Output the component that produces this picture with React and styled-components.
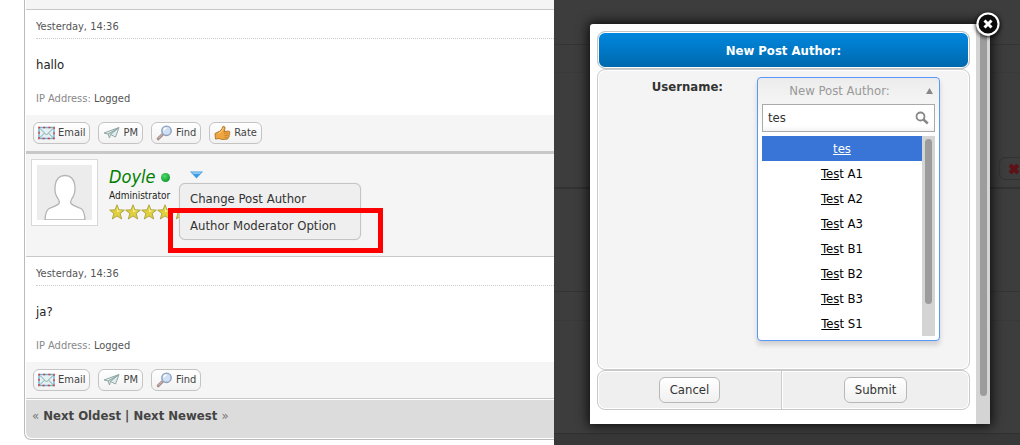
import React, { useState } from 'react';
import styled, { createGlobalStyle } from 'styled-components';

const Global = createGlobalStyle`
  * { box-sizing: border-box; }
  body {
    margin: 0;
    background: #fff;
    font-family: "DejaVu Sans Condensed", "DejaVu Sans", Tahoma, sans-serif;
    color: #333;
  }
  button, input { font-family: inherit; color: inherit; margin: 0; }
  svg { display: block; flex: none; }
`;

const Page = styled.div`
  display: grid;
  grid-template-columns: minmax(0, 554fr) minmax(0, 466fr);
  min-height: 100vh;
`;

/* ---------- Thread ---------- */

const Thread = styled.main`
  padding: 0 0 5px 24px;
  overflow: hidden;
`;

const ThreadPanel = styled.div`
  border: solid #bbb;
  border-width: 0 0 1px 1px;
  border-radius: 0 0 0 7px;
  padding: 0 0 1px 1px;
`;

const PostHead = styled.header`
  position: relative;
  display: flex;
  gap: 11px;
  min-height: ${p => (p.$short ? 10 : 103)}px;
  padding: ${p => (p.$short ? '0' : '5px')};
  background: #f5f5f5;
  border-bottom: 1px solid #c8c8c8;
`;

const PostBody = styled.div`
  padding: 10px 0 7px 10px;
`;

const PostDate = styled.div`
  height: 19px;
  border-bottom: 1px dotted #ccc;
  font-size: 11px;
  line-height: 14px;
  color: #555;
`;

const PostText = styled.p`
  margin: 0;
  padding: 16px 0 15px;
  font-size: 13px;
  line-height: 20px;
  color: #222;
`;

const PostMeta = styled.div`
  font-size: 11px;
  line-height: 18px;
  color: #888;
  span { color: #555; }
`;

const ActionBar = styled.div`
  display: flex;
  gap: 8px;
  padding: 7px;
  background: #f5f5f5;
  border-bottom: ${p => (p.$last ? 1 : 3)}px solid #c8c8c8;
`;

const ActionButton = styled.button`
  display: flex;
  align-items: center;
  gap: 3px;
  height: 22px;
  padding: 0 4px;
  border: 1px solid #c4c4c4;
  border-radius: 6px;
  background: linear-gradient(#fff, #f2f2f2);
  font-size: 11px;
  line-height: 14px;
  color: #444;
`;

const AvatarFrame = styled.div`
  width: 67px;
  height: 67px;
  padding: 5px;
  border: 1px solid #d8d8d8;
  background: #fff;
`;

const Author = styled.div`
  padding-top: 7px;
`;

const NameRow = styled.div`
  display: flex;
  align-items: center;
  gap: 6px;
  height: 22px;
`;

const AuthorName = styled.a`
  font-size: 18px;
  line-height: 22px;
  font-style: italic;
  color: green;
  text-decoration: none;
`;

const Online = styled.span`
  width: 9px;
  height: 9px;
  border-radius: 50%;
  background: radial-gradient(circle at 40% 35%, #4fdc6c, #0c9a2c 75%);
`;

const MenuToggle = styled.button`
  padding: 0 0 4px;
  margin-left: 14px;
  border: 0;
  background: none;
`;

const Role = styled.div`
  padding-top: 1px;
  font-size: 10px;
  line-height: 14px;
  color: #222;
`;

const Stars = styled.div`
  display: flex;
  padding-top: 1px;
`;

const Menu = styled.div`
  position: absolute;
  left: 153px;
  top: 29px;
  display: flex;
  flex-direction: column;
  width: 182px;
  padding: 1px 1px 0;
  border: 1px solid #c4c4c4;
  border-radius: 6px;
  background: #efefef;
  box-shadow: 0 0 1px #ccc;
`;

const MenuItem = styled.button`
  height: 27px;
  padding: 0 9px;
  border: 0;
  background: none;
  text-align: left;
  font-size: 13px;
  line-height: 20px;
  color: #333;
`;

const Marker = styled.div`
  position: absolute;
  left: 142px;
  top: 54px;
  width: 215px;
  height: 45px;
  border: 5px solid #f00;
`;

const ThreadNav = styled.nav`
  margin-top: 1px;
  padding: 7px 6px;
  min-height: 38px;
  border-radius: 0 0 0 6px;
  background: #dcdcdc;
  font-size: 13px;
  line-height: 18px;
  font-weight: bold;
  color: #444;
  span { color: #777; font-weight: normal; }
  a { color: #444; text-decoration: none; }
`;

/* ---------- Dimmed page and dialog ---------- */

const Overlay = styled.aside`
  position: relative;
  padding: 24px 30px 21px 36px;
  background: #3d3d3d;
  overflow: hidden;
`;

const Dimmed = styled.div`
  position: absolute;
  inset: 0;
`;

const DimRow = styled.div`
  display: flex;
  justify-content: flex-end;
  align-items: flex-end;
  height: ${p => p.$h}px;
  padding-bottom: 7px;
  background: ${p => p.$bg || '#3d3d3d'};
  border-bottom: ${p => p.$line || 1}px solid ${p => p.$c || '#343434'};
`;

const DimButton = styled.span`
  display: flex;
  align-items: center;
  justify-content: center;
  width: 30px;
  height: 23px;
  margin-right: -9px;
  border: 1px solid #323232;
  border-radius: 6px;
`;

const Dialog = styled.section`
  position: relative;
  display: flex;
  min-height: 400px;
  border-radius: 3px 0 0 0;
  background: #fff;
  box-shadow: 0 0 12px 2px rgba(0, 0, 0, 0.8);
`;

const Form = styled.form`
  flex: 1;
  min-width: 0;
  padding: 7px 6px 14px 7px;
`;

const DialogTitle = styled.h2`
  margin: 0;
  padding: 9px 9px 8px;
  border: 1px solid #c4c4c4;
  border-radius: 8px;
  background: linear-gradient(#0088e0, #0068ac) padding-box;
  box-shadow: inset 0 0 0 1px #fff;
  text-align: center;
  font-size: 13px;
  line-height: 19px;
  color: #fff;
`;

const FormBody = styled.div`
  display: grid;
  grid-template-columns: 125px 183px;
  column-gap: 34px;
  min-height: 301px;
  padding: 7px 0;
  border: 1px solid #ccc;
  border-radius: 8px;
  background: #f4f4f4;
  box-shadow: inset 0 0 0 1px #fff;
`;

const FieldLabel = styled.label`
  text-align: right;
  font-size: 13px;
  line-height: 20px;
  font-weight: bold;
`;

const Combo = styled.div`
  height: 264px;
  padding: 0 4px 4px;
  border: 1px solid #5897fb;
  border-radius: 4px;
  background: #fff linear-gradient(#ececec, #fff 54px);
  background-clip: padding-box;
  box-shadow: 0 4px 5px rgba(0, 0, 0, 0.15);
`;

const ComboHead = styled.button`
  display: flex;
  align-items: center;
  gap: 9px;
  width: 100%;
  height: 26px;
  padding: 0 2px 0 0;
  border: 0;
  background: none;
  font-size: 13px;
  line-height: 20px;
  color: #999;
  span { flex: 1; text-align: center; }
`;

const SearchBox = styled.div`
  display: flex;
  align-items: center;
  height: 28px;
  padding: 0 5px;
  margin-bottom: 4px;
  border: 1px solid #aaa;
  background: linear-gradient(#fff 80%, #f4f4f4);
`;

const SearchInput = styled.input`
  flex: 1;
  min-width: 0;
  padding: 0;
  border: 0;
  outline: 0;
  background: none;
  font-size: 13px;
  line-height: 20px;
`;

const Results = styled.div`
  display: flex;
  height: 200px;
`;

const OptionList = styled.ul`
  flex: 1;
  margin: 0;
  padding: 0;
  list-style: none;
  overflow: hidden;
`;

const Option = styled.li`
  height: 25px;
  font-size: 13px;
  line-height: 25px;
  text-align: center;
  color: ${p => (p.$active ? '#fff' : '#000')};
  background: ${p => (p.$active ? '#3875d7' : '#fff')};
`;

const Track = styled.div`
  width: ${p => p.$w}px;
  padding: ${p => p.$pad};
  background: #d4d4d4;
`;

const Thumb = styled.div`
  height: ${p => p.$h}px;
  border-radius: 4px;
  background: #9c9c9c;
`;

const FormFooter = styled.div`
  display: grid;
  grid-template-columns: 183fr 188fr;
  border: 1px solid #c8c8c8;
  border-radius: 8px;
  background: #efefef;
  box-shadow: inset 0 0 0 1px #fff;
`;

const FooterCell = styled.div`
  display: flex;
  justify-content: center;
  padding: 6px;
  & + & { border-left: 1px solid #ccc; box-shadow: inset 1px 0 #fff; }
`;

const PushButton = styled.button`
  height: 26px;
  padding: 0 10px;
  border: 1px solid #b8b8b8;
  border-radius: 6px;
  background: linear-gradient(#fff, #f0f0f0);
  font-size: 13px;
  line-height: 20px;
`;

const CloseButton = styled.button`
  position: absolute;
  top: -12px;
  right: -10px;
  padding: 0;
  border: 0;
  border-radius: 50%;
  background: none;
  box-shadow: 0 1px 4px #000;
`;

/* ---------- Drawings ---------- */

const EmailIcon = () => (
  <svg width="17" height="16" viewBox="0 0 17 16">
    <rect x="1" y="2.5" width="15" height="11" fill="#e4f1f4" stroke="#6ab4dc" strokeWidth="1.4" />
    <rect x="1" y="2.5" width="15" height="11" fill="none" stroke="#e0382e" strokeWidth="1.4" strokeDasharray="2 3.2" strokeDashoffset="1" />
    <path d="M2 3.5l6.5 6.5L15 3.5M2 12.5l4.5-4.3M15 12.5l-4.5-4.3" fill="none" stroke="#84aaa8" />
  </svg>
);

const PlaneIcon = () => (
  <svg width="17" height="16" viewBox="0 0 17 16">
    <path d="M1 8L16 2.5 12.5 12 7.5 9.5 6.5 13 5 9z" fill="#e3eeee" stroke="#8fa8a6" strokeLinejoin="round" />
    <path d="M5 9L15.5 3 7.5 9.5" fill="#bfd2d0" stroke="#8fa8a6" strokeLinejoin="round" />
  </svg>
);

const FindIcon = () => (
  <svg width="17" height="16" viewBox="0 0 17 16">
    <path d="M6.5 9.5L2.2 13.8" stroke="#a58a86" strokeWidth="3" strokeLinecap="round" />
    <path d="M6.3 9.3L2.5 13.2" stroke="#d6c6c3" strokeLinecap="round" />
    <circle cx="10.5" cy="5.8" r="4.7" fill="#cfe0f5" stroke="#8d9fbd" strokeWidth="1.4" />
    <path d="M7.8 5.6a2.8 2.8 0 0 1 2.7-2.5" fill="none" stroke="#fff" strokeWidth="1.2" />
  </svg>
);

const ThumbIcon = () => (
  <svg width="17" height="16" viewBox="0 0 17 16">
    <path d="M1 8.5L4 7c2-.5 4-2.500 4.600-5 .2-1 2.400-1 2.400 1 0 1.500-.6 2.600-1 3.500l4.600-.4c1.700 0 1.700 2 .5 2.200 1 .4.8 2-.3 2.100.8.5.4 1.900-.6 2 .4.800-.2 1.600-1.200 1.700l-4.500.4c-1.600 0-2.500-.8-3.500-1l-3.500.6z" fill="#eda63f" stroke="#b06f20" strokeWidth=".9" strokeLinejoin="round" />
    <path d="M10 8.300h4.500M10.500 10.400h4M10.500 12.400h3" stroke="#c17f2a" strokeWidth=".8" />
    <path d="M4.500 8.200C7 7.500 8.500 5.500 9.400 3" fill="none" stroke="#fbd38a" />
  </svg>
);

const StarIcon = () => (
  <svg width="16" height="16" viewBox="0 0 16 16">
    <path d="M8 .8l2 5 5.400.3-4.200 3.400 1.500 5.500L8 12l-4.700 3 1.500-5.500L.6 6.100 6 5.800z" fill="#e0d03c" stroke="#a3983a" strokeWidth=".8" />
    <path d="M8 3l1.200 3.600 3.300.2L8 8.200z" fill="#f8f09a" />
  </svg>
);

const AvatarIcon = () => (
  <svg width="55" height="55" viewBox="0 0 55 55">
    <rect width="55" height="55" fill="#ececec" />
    <path d="M8 55c.3-6 1-9.500 4-11.500 4-2 8-2.500 10-5 .8-1.400.3-3-1-5-2.800-3.500-3.500-8-2.800-13C19 14.500 22.500 10.500 28 10.500s9 4 9.800 10c.6 5-.2 9.500-2.800 13-1.300 2-1.800 3.600-1 5 2 2.500 6 3 10 5 3 2 3.700 5.500 4 11.500z" fill="#fff" stroke="#b4b4b4" strokeWidth="1.300" />
  </svg>
);

const actions = { Email: EmailIcon, PM: PlaneIcon, Find: FindIcon, Rate: ThumbIcon };

function PostContent({ text, names, last }) {
  return (
    <>
      <PostBody>
        <PostDate>Yesterday, 14:36</PostDate>
        <PostText>{text}</PostText>
        <PostMeta>IP Address: <span>Logged</span></PostMeta>
      </PostBody>
      <ActionBar $last={last}>
        {names.map(name => {
          const Icon = actions[name];
          return <ActionButton key={name} type="button"><Icon />{name}</ActionButton>;
        })}
      </ActionBar>
    </>
  );
}

const users = ['Test A1', 'Test A2', 'Test A3', 'Test B1', 'Test B2', 'Test B3', 'Test S1'];

export default function App() {
  const [query, setQuery] = useState('tes');
  return (
    <Page>
      <Global />
      <Thread>
        <ThreadPanel>
          <article>
            <PostHead $short />
            <PostContent text="hallo" names={['Email', 'PM', 'Find', 'Rate']} />
          </article>
          <article>
            <PostHead>
              <AvatarFrame><AvatarIcon /></AvatarFrame>
              <Author>
                <NameRow>
                  <AuthorName href="#doyle">Doyle</AuthorName>
                  <Online />
                  <MenuToggle type="button" aria-label="Author options">
                    <svg width="13" height="8" viewBox="0 0 13 8">
                      <path d="M0 .5h13L6.500 7.500z" fill="#3f9be0" />
                      <path d="M1.500 1.200h10L9.500 3h-6z" fill="#8fcaf2" />
                    </svg>
                  </MenuToggle>
                </NameRow>
                <Role>Administrator</Role>
                <Stars>{[1, 2, 3, 4, 5].map(n => <StarIcon key={n} />)}</Stars>
              </Author>
              <Menu>
                <MenuItem type="button">Change Post Author</MenuItem>
                <MenuItem type="button">Author Moderator Option</MenuItem>
              </Menu>
              <Marker />
            </PostHead>
            <PostContent text="ja?" names={['Email', 'PM', 'Find']} last />
          </article>
          <ThreadNav>
            <span>«</span> <a href="#oldest">Next Oldest</a> | <a href="#newest">Next Newest</a> <span>»</span>
          </ThreadNav>
        </ThreadPanel>
      </Thread>

      <Overlay>
        <Dimmed>
          <DimRow $h={45} />
          <DimRow $h={28} $c="#3a3a3a" />
          <DimRow $h={116} $line={2} $c="#323232">
            <DimButton>
              <svg width="12" height="12" viewBox="0 0 12 12">
                <path d="M2 2l8 8M10 2l-8 8" stroke="#5e1216" strokeWidth="4" />
              </svg>
            </DimButton>
          </DimRow>
          <DimRow $h={103} />
          <DimRow $h={29} $c="#393939" />
          <DimRow $h={113} $c="#303030" />
          <DimRow $h={40} $bg="#383838" />
        </Dimmed>
        <Dialog role="dialog" aria-labelledby="dialog-title">
          <Form onSubmit={e => e.preventDefault()}>
            <DialogTitle id="dialog-title">New Post Author:</DialogTitle>
            <FormBody>
              <FieldLabel htmlFor="username">Username:</FieldLabel>
              <Combo>
                <ComboHead id="username" type="button">
                  <span>New Post Author:</span>
                  <svg width="7" height="6" viewBox="0 0 7 6"><path d="M3.500 0L7 6H0z" fill="#888" /></svg>
                </ComboHead>
                <SearchBox>
                  <SearchInput aria-label="Search users" value={query} onChange={e => setQuery(e.target.value)} />
                  <svg width="14" height="14" viewBox="0 0 14 14">
                    <circle cx="5.500" cy="5.500" r="4" fill="none" stroke="#888" strokeWidth="1.800" />
                    <path d="M8.500 8.500l4.300 4" stroke="#888" strokeWidth="2.400" />
                  </svg>
                </SearchBox>
                <Results>
                  <OptionList role="listbox" aria-label="Users">
                    <Option role="option" aria-selected="true" $active><u>tes</u></Option>
                    {users.map(name => (
                      <Option key={name} role="option" aria-selected="false"><u>{name.slice(0, 3)}</u>{name.slice(3)}</Option>
                    ))}
                  </OptionList>
                  <Track $w={13} $pad="3px"><Thumb $h={165} /></Track>
                </Results>
              </Combo>
            </FormBody>
            <FormFooter>
              <FooterCell><PushButton type="button">Cancel</PushButton></FooterCell>
              <FooterCell><PushButton type="submit">Submit</PushButton></FooterCell>
            </FormFooter>
          </Form>
          <Track $w={14} $pad="0 3px 0 4px"><Thumb $h={372} /></Track>
          <CloseButton type="button" aria-label="Close">
            <svg width="24" height="24" viewBox="0 0 24 24">
              <circle cx="12" cy="12" r="10.500" fill="#0a0a0a" stroke="#fff" strokeWidth="2" />
              <path d="M8.500 8.500l7 7M15.500 8.500l-7 7" stroke="#fff" strokeWidth="3" />
            </svg>
          </CloseButton>
        </Dialog>
      </Overlay>
    </Page>
  );
}
